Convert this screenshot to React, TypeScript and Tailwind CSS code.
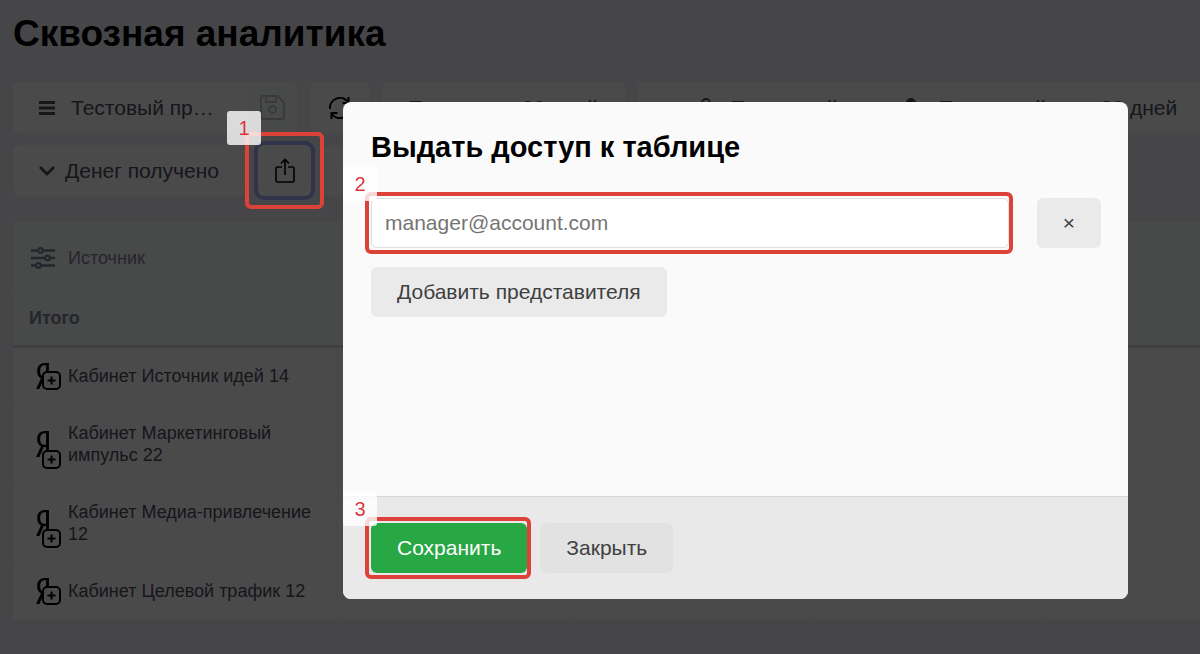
import type { ReactNode } from "react";
import { FaYandex } from "react-icons/fa6";

const rows = [
  "Кабинет Источник идей 14",
  "Кабинет Маркетинговый импульс 22",
  "Кабинет Медиа-привлечение 12",
  "Кабинет Целевой трафик 12",
];

const MenuIcon = () => (
  <svg width="16" height="14" viewBox="0 0 16 14" stroke="currentColor" strokeWidth="3" aria-hidden="true">
    <path d="M0 1.5h16M0 7h16M0 12.5h16" />
  </svg>
);

const ChevronIcon = () => (
  <svg width="16" height="10" viewBox="0 0 16 10" fill="none" stroke="currentColor" strokeWidth="2.8" aria-hidden="true">
    <path d="M1 1l7 7 7-7" />
  </svg>
);

const SaveIcon = () => (
  <svg width="25" height="25" viewBox="0 0 25 25" fill="none" stroke="currentColor" strokeWidth="1.8" aria-hidden="true">
    <path d="M1 3a2 2 0 0 1 2-2h14.500l6.500 6.500V22a2 2 0 0 1-2 2H3a2 2 0 0 1-2-2z" />
    <path d="M6 1v6h10V1" />
    <circle cx="12.5" cy="14.500" r="3.5" />
  </svg>
);

const RefreshIcon = () => (
  <svg width="24" height="24" viewBox="0 0 24 24" fill="none" stroke="currentColor" strokeWidth="2" aria-hidden="true">
    <path d="M2 13A10 10 0 0 1 20 6" />
    <path d="M22 11A10 10 0 0 1 4 18" />
    <path d="M20.500 1v6h-6M3.500 23v-6h6" />
  </svg>
);

const ShareIcon = () => (
  <svg width="20" height="26" viewBox="0 0 20 26" fill="none" stroke="currentColor" strokeWidth="1.6" aria-hidden="true">
    <path d="M7 9H2.500A1.500 1.500 0 0 0 1 10.500v12A1.500 1.500 0 0 0 2.500 24h15a1.500 1.500 0 0 0 1.500-1.500v-12A1.500 1.500 0 0 0 17.500 9H13" />
    <path d="M10 17V2M6 5.500L10 1.500 14 5.500" />
  </svg>
);

const SlidersIcon = () => (
  <svg width="24" height="22" viewBox="0 0 24 22" fill="none" stroke="currentColor" strokeWidth="2.6" aria-hidden="true">
    <path d="M0 3.500h7M12 3.500h12M0 11h14M19 11h5M0 18.500h5M10 18.500h14" />
    <circle cx="9.500" cy="3.500" r="2.300" strokeWidth="2.200" />
    <circle cx="16.500" cy="11" r="2.300" strokeWidth="2.200" />
    <circle cx="7.500" cy="18.500" r="2.300" strokeWidth="2.200" />
  </svg>
);

const PlusBoxIcon = ({ className }: { className: string }) => (
  <svg width="19" height="19" viewBox="0 0 19 19" fill="#f8f8f8" stroke="currentColor" strokeWidth="2" className={className} aria-hidden="true">
    <rect x="1" y="1" width="17" height="17" rx="4" />
    <path d="M9.500 5.500v8M5.500 9.500h8" />
  </svg>
);

const UserIcon = () => (
  <svg width="16" height="20" viewBox="0 0 16 20" fill="none" stroke="currentColor" strokeWidth="2" aria-hidden="true">
    <circle cx="8" cy="5" r="4" />
    <path d="M1 19c0-9 14-9 14 0" />
  </svg>
);

const UserFilledIcon = () => (
  <svg width="16" height="20" viewBox="0 0 16 20" fill="currentColor" aria-hidden="true">
    <circle cx="8" cy="5" r="5" />
    <path d="M0 20c0-11 16-11 16 0z" />
  </svg>
);

// red frame with a step number, drawn above everything
const Mark = ({ step, className, badge }: { step: number; className: string; badge: string }) => (
  <span className={`pointer-events-none absolute z-50 rounded-md border-4 border-[#dc4238] ${className}`}>
    <span
      className={`absolute flex size-[34px] items-center justify-center rounded-[3px] bg-white/80 text-xl text-[#d8343a] ${badge}`}
    >
      {step}
    </span>
  </span>
);

const ToolButton = ({ label, className, children }: { label?: string; className: string; children?: ReactNode }) => (
  <button type="button" aria-label={label} className={`flex h-[51px] items-center rounded-md bg-[#f8f8f8] ${className}`}>
    {children}
  </button>
);

const App = () => {
  return (
    <div className="min-h-screen overflow-hidden bg-[#e9ecf0] font-['Liberation_Sans',Arial,sans-serif] text-[#4b4c5c]">
      <main className="pl-[13px]">
        <h1 className="pt-3 text-[37px] leading-[44px] font-bold text-black">Сквозная аналитика</h1>

        {/* Toolbar */}
        <div className="mt-[26px] flex gap-[13px] text-[21px] whitespace-nowrap">
          <div className="flex w-[284px] shrink-0 overflow-hidden rounded-md">
            <button type="button" className="flex h-[51px] flex-1 items-center gap-4 bg-[#f8f8f8] pl-[26px]">
              <MenuIcon />
              Тестовый пр…
            </button>
            <button type="button" aria-label="Сохранить" className="flex w-[49px] items-center justify-center bg-[#f2f3f6] text-[#bfc0cc]">
              <SaveIcon />
            </button>
          </div>
          <ToolButton label="Обновить" className="w-[59px] shrink-0 justify-center text-black">
            <RefreshIcon />
          </ToolButton>
          <ToolButton className="w-[243px] shrink-0 pl-[26px]">Последние 30 дней</ToolButton>
          <div className="flex flex-1 rounded-l-md bg-[#f8f8f8]">
            <ToolButton className="gap-4 pl-[60px]">
              <UserIcon />
              Последний клик
            </ToolButton>
            <ToolButton className="gap-5 pl-4">
              <UserFilledIcon />
              Последний клик 30 дней
            </ToolButton>
          </div>
        </div>

        <div className="mt-3 flex gap-[13px] text-[21px] whitespace-nowrap">
          <ToolButton className="w-[232px] gap-[10px] pl-[26px]">
            <ChevronIcon />
            Денег получено
          </ToolButton>
          <div className="relative">
            <ToolButton label="Поделиться" className="w-[53px] justify-center text-black ring-4 ring-[#a3acf8]">
              <ShareIcon />
            </ToolButton>
            <Mark step={1} className="-inset-[13px]" badge="-top-[25px] -left-[22px]" />
          </div>
          <ToolButton label="Показатели" className="w-[240px]" />
        </div>

        {/* Sources */}
        <table className="mt-[26px] w-full table-fixed border-collapse text-left text-lg leading-[22px]">
          <colgroup>
            <col className="w-[324px]" />
            <col className="w-[236px]" />
            <col className="w-[236px]" />
            <col className="w-[236px]" />
            <col />
          </colgroup>
          <thead className="bg-[#f1f3f5] text-[#7c8090]">
            <tr className="h-[69px] border-b border-[#e9ebee]">
              <th className="pl-[18px] font-normal">
                <span className="flex items-center gap-[13px] pt-1">
                  <SlidersIcon />
                  Источник
                </span>
              </th>
              <td colSpan={4} />
            </tr>
            <tr className="h-[55px] border-b-3 border-[#cfd2d8]">
              <th className="pl-4 font-bold">Итого</th>
              <td colSpan={4} />
            </tr>
          </thead>
          <tbody className="bg-[#f8f8f8]">
            {rows.map((name) => (
              <tr key={name} className="border-b border-[#eeeef0]">
                <td className="border-r border-[#eeeef0] py-[17px] pr-5 pl-[23px]">
                  <div className="flex items-center gap-[7px]">
                    <span className="relative flex w-[25px] shrink-0 items-center self-stretch text-black">
                      <FaYandex className="-my-1 h-[26px] w-[13px]" />
                      <PlusBoxIcon className="absolute right-0 -bottom-[3px]" />
                    </span>
                    {name}
                  </div>
                </td>
                <td className="border-r border-[#eeeef0]" />
                <td className="border-r border-[#eeeef0]" />
                <td className="border-r border-[#eeeef0]" />
                <td />
              </tr>
            ))}
          </tbody>
        </table>
      </main>

      {/* Access dialog */}
      <div className="fixed inset-0 z-40 bg-black/70 pt-[102px] pr-[72px] pl-[343px]">
        <div role="dialog" aria-labelledby="access-title" className="rounded-lg bg-[#fafafa]">
          <div className="min-h-[394px] pt-7 pr-[27px] pl-7">
            <h2 id="access-title" className="text-[29px] leading-[34px] font-bold text-black">
              Выдать доступ к таблице
            </h2>
            <div className="mt-[34px] flex gap-7">
              <div className="relative flex-1">
                <input
                  type="email"
                  aria-label="Email представителя"
                  placeholder="manager@account.com"
                  className="h-[50px] w-full rounded-md border border-[#d9e0e6] bg-white px-[13px] text-[21px] placeholder:text-[#757575]"
                />
                <Mark step={2} className="-inset-y-[6px] -right-1 -left-[6px]" badge="-top-[29px] -left-[26px]" />
              </div>
              <button type="button" aria-label="Удалить" className="h-[50px] w-16 rounded-md bg-[#eaeaea] text-[21px] text-[#404040]">
                ×
              </button>
            </div>
            <button type="button" className="mt-[19px] h-[50px] rounded-md bg-[#eaeaea] px-[26px] text-[21px] text-[#404040]">
              Добавить представителя
            </button>
          </div>
          <div className="flex gap-[13px] rounded-b-lg border-t border-[#d6d6d6] bg-[#e9e9e9] px-7 py-[26px] text-[21px]">
            <div className="relative">
              <button type="button" className="h-[50px] rounded-md bg-[#28a745] px-[26px] text-white">
                Сохранить
              </button>
              <Mark step={3} className="-inset-y-[6px] -right-1 -left-[6px]" badge="-top-[29px] -left-[26px]" />
            </div>
            <button type="button" className="h-[50px] rounded-md bg-[#e2e2e2] px-[26px] text-[#404040]">
              Закрыть
            </button>
          </div>
        </div>
      </div>
    </div>
  );
};

export default App;
